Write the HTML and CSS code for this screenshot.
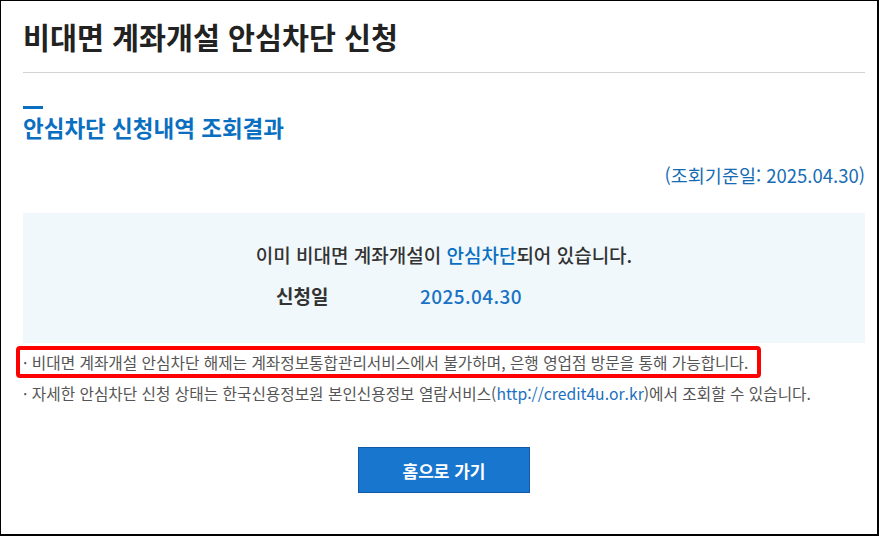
FILE: index.html
```html
<!DOCTYPE html>
<html lang="ko">
<head>
<meta charset="utf-8">
<title>비대면 계좌개설 안심차단 신청</title>
<link rel="stylesheet" href="styles.css">
</head>
<body>
<div class="page">
  <header class="page-head">
    <h1 class="page-title">비대면 계좌개설 안심차단 신청</h1>
  </header>
  <section class="result">
    <span class="sub-bar"></span>
    <h2 class="sub-title">안심차단 신청내역 조회결과</h2>
    <p class="base-date">(조회기준일: 2025.04.30)</p>
    <div class="info-box">
      <p class="info-msg">이미 비대면 계좌개설이 <span class="hl">안심차단</span>되어 있습니다.</p>
      <div class="info-row">
        <span class="info-label">신청일</span>
        <span class="info-value">2025.04.30</span>
      </div>
    </div>
    <ul class="notes">
      <li class="note note-marked">· 비대면 계좌개설 안심차단 해제는 계좌정보통합관리서비스에서 불가하며, 은행 영업점 방문을 통해 가능합니다.</li>
      <li class="note">· 자세한 안심차단 신청 상태는 한국신용정보원 본인신용정보 열람서비스(<span class="link">http://credit4u.or.kr</span>)에서 조회할 수 있습니다.</li>
    </ul>
    <div class="actions">
      <button class="btn-home" type="button">홈으로 가기</button>
    </div>
  </section>
</div>
</body>
</html>
```
FILE: styles.css
```css
* { box-sizing: border-box; }
html, body { margin: 0; padding: 0; background: #fff; }
body {
  font-family: "Noto Sans CJK KR", "Noto Sans", "Liberation Sans", sans-serif;
  color: #333;
}
.page {
  width: 879px;
  height: 536px;
  border-style: solid;
  border-color: #000;
  border-width: 1px 2px 2px 1px;
  padding: 0 12px 0 22px;
  overflow: hidden;
}
.page-head {
  padding-top: 15px;
  padding-bottom: 16px;
  border-bottom: 1px solid #d3d3d3;
}
.page-title {
  margin: 0;
  font-size: 29.3px;
  line-height: 40px;
  font-weight: 700;
  color: #222;
}
.result { display: flex; flex-direction: column; }
.sub-bar {
  display: block;
  width: 20px;
  height: 3px;
  margin-top: 33px;
  background: #0a6fc0;
}
.sub-title {
  margin: 3px 0 0;
  font-size: 22.5px;
  line-height: 30px;
  font-weight: 700;
  color: #0a6fc0;
}
.base-date {
  margin: 21px 0 0;
  text-align: right;
  font-size: 18.5px;
  line-height: 24px;
  color: #166cb4;
}
.info-box {
  margin-top: 26px;
  height: 130px;
  background: #f1f8fc;
  padding-top: 29px;
}
.info-msg {
  margin: 0;
  text-align: center;
  font-size: 19px;
  line-height: 26px;
  font-weight: 500;
  color: #333;
}
.hl { color: #0a6fc0; }
.info-row {
  display: flex;
  margin-top: 15px;
  padding-left: 253px;
  font-size: 19px;
  line-height: 26px;
  font-weight: 700;
}
.info-label { width: 144px; color: #333; }
.info-value { color: #1a73c4; font-weight: 500; letter-spacing: 0.4px; }
.notes {
  list-style: none;
  margin: 3px 0 0;
  padding: 0;
}
.note {
  font-size: 15.7px;
  line-height: 22px;
  color: #555;
  white-space: nowrap;
}
.note-marked {
  display: inline-block;
  margin-left: -7px;
  padding: 1px 9px 0 3px;
  line-height: 23px;
  border: 4px solid #ff0000;
  border-radius: 4px;
}
.note + .note { margin-top: 5px; }
.link { color: #1a6fc0; }
.actions {
  display: flex;
  justify-content: center;
  margin-top: 42px;
}
.btn-home {
  width: 172px;
  height: 46px;
  background: #1976ce;
  border: 1px solid #0e5aa6;
  color: #fff;
  font-family: inherit;
  font-size: 17px;
  font-weight: 700;
  padding: 0;
}
```
